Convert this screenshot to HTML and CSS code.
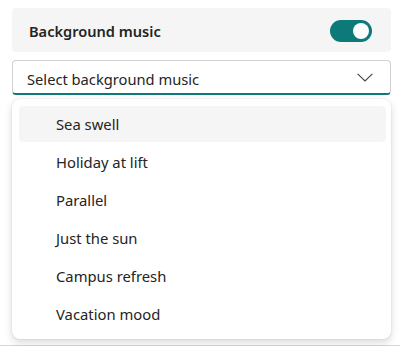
FILE: index.html
```html
<!DOCTYPE html>
<html lang="en">
<head>
  <meta charset="UTF-8">
  <meta name="viewport" content="width=device-width, initial-scale=1.0">
  <title>Background music</title>
  <link rel="stylesheet" href="styles.css">
</head>
<body>
  <div class="page">
    <div class="panel">
      <div class="setting-card">
        <span class="setting-label">Background music</span>
        <button class="switch is-on" role="switch" aria-checked="true" aria-label="Background music">
          <span class="switch-knob"></span>
        </button>
      </div>

      <div class="dropdown">
        <span class="dropdown-value">Select background music</span>
        <svg class="dropdown-chevron" width="16" height="9" viewBox="0 0 16 9" aria-hidden="true">
          <path d="M0.6 0.8 L8 8 L15.4 0.8" fill="none" stroke="#424242" stroke-width="1.1"/>
        </svg>
      </div>

      <ul class="listbox" role="listbox">
        <li class="option is-active" role="option">Sea swell</li>
        <li class="option" role="option">Holiday at lift</li>
        <li class="option" role="option">Parallel</li>
        <li class="option" role="option">Just the sun</li>
        <li class="option" role="option">Campus refresh</li>
        <li class="option" role="option">Vacation mood</li>
      </ul>
    </div>
  </div>
</body>
</html>
```

FILE: styles.css
```css
:root {
  --brand: #0b7a78;
  --text: #242424;
  --gray-bg: #f5f5f5;
  --stroke: #d1d1d1;
}

* {
  margin: 0;
  padding: 0;
  box-sizing: border-box;
}

body {
  font-family: "Segoe UI", "Noto Sans", sans-serif;
  color: var(--text);
  background: white;
}

.page {
  height: 346px;
  padding: 8px 9px 0 12px;
  border-bottom: 1px solid #d6d6d6;
}

.panel {
  width: 379px;
  display: flex;
  flex-direction: column;
}

.setting-card {
  height: 44px;
  display: flex;
  align-items: center;
  justify-content: space-between;
  padding: 1px 19px 0 17px;
  background: var(--gray-bg);
  border-radius: 4px;
}

.setting-label {
  font-size: 14.6px;
  font-weight: 600;
}

.switch {
  width: 42px;
  height: 22px;
  border: none;
  border-radius: 11px;
  background: var(--brand);
  display: flex;
  align-items: center;
  justify-content: flex-end;
  padding: 0 3px;
  cursor: pointer;
}

.switch-knob {
  width: 16px;
  height: 16px;
  border-radius: 50%;
  background: white;
}

.dropdown {
  margin-top: 8px;
  height: 35px;
  display: flex;
  align-items: center;
  justify-content: space-between;
  padding: 0 17px 0 14px;
  border: 1px solid var(--stroke);
  border-bottom: 2px solid var(--brand);
  border-radius: 4px;
}

.dropdown-value {
  font-size: 14.7px;
  padding-top: 3px;
}

.listbox {
  list-style: none;
  margin-top: 4px;
  height: 240px;
  padding: 7px 5px 7px 7px;
  display: flex;
  flex-direction: column;
  gap: 2px;
  border-radius: 8px;
  background: white;
  box-shadow: 0 0 2px rgba(0, 0, 0, 0.12), 0 4px 8px rgba(0, 0, 0, 0.14);
}

.option {
  height: 36px;
  display: flex;
  align-items: center;
  padding-left: 37px;
  font-size: 14.8px;
  border-radius: 4px;
}

.option.is-active {
  background: var(--gray-bg);
}
```
